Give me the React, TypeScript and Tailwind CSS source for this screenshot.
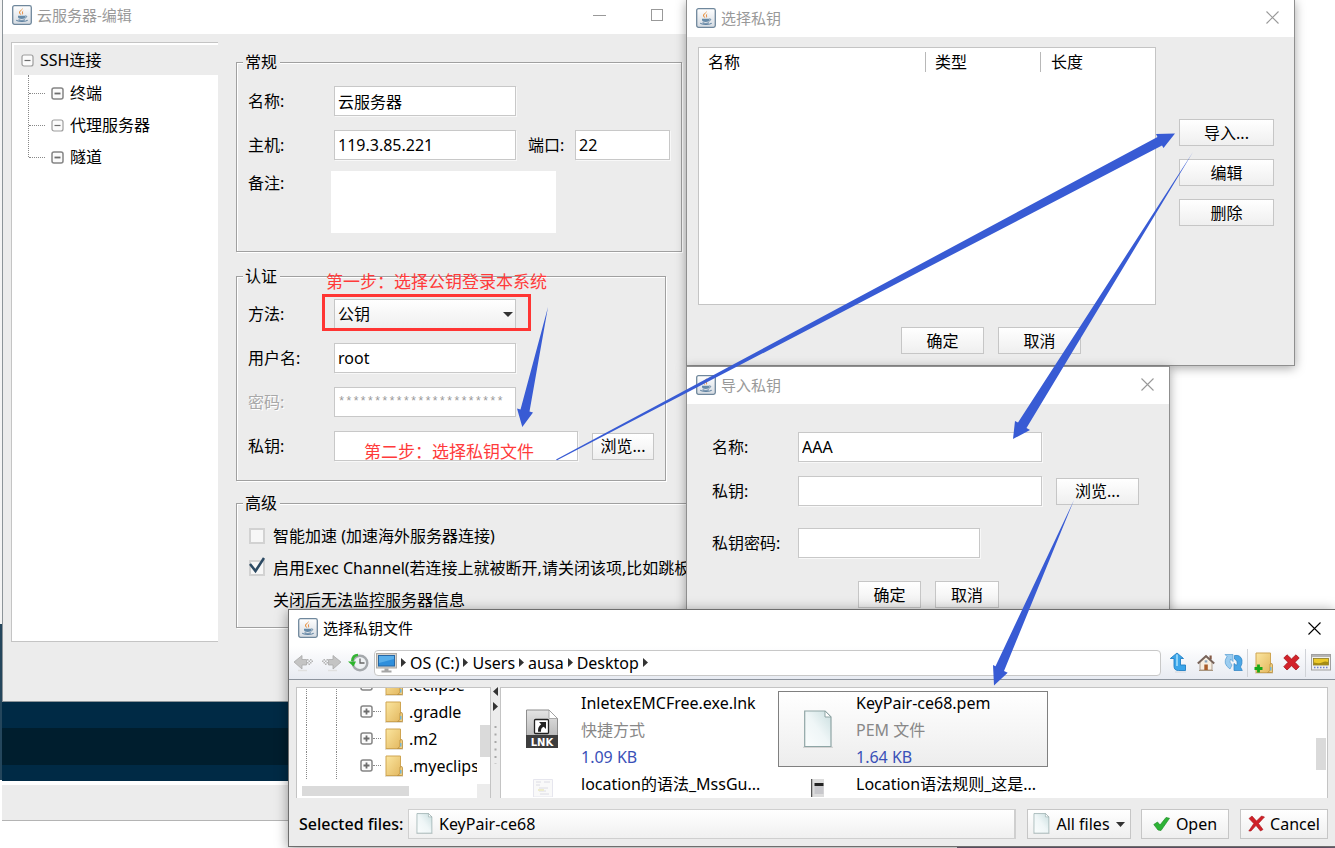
import React from "react";

const FIELD =
  "h-[30px] border border-[#c8c8c8] bg-white px-[3px] text-[16px] leading-6 text-black outline-none shadow-[1px_1px_0_#f8f8f8]";
const BUTTON =
  "flex h-[27px] items-center justify-center border border-[#c6c6c6] bg-linear-to-b from-white to-[#efefef] text-[16px] leading-6 text-black";
const GROUP =
  "border border-[#a0a0a0] pl-[11px] shadow-[1px_1px_0_#fff,inset_1px_1px_0_#fff]";
const LEGEND = "-ml-[5px] h-6 bg-[#ececec] pl-[2px] pr-[3px] text-[16px] leading-6";

function JavaIcon() {
  return (
    <svg width="20" height="20" viewBox="0 0 20 20" className="shrink-0" aria-hidden="true">
      <defs>
        <linearGradient id="java-bg" x1="0" y1="0" x2="0" y2="1">
          <stop offset="0" stopColor="#ffffff" />
          <stop offset="1" stopColor="#d5dbe2" />
        </linearGradient>
      </defs>
      <rect x="0.7" y="0.7" width="18.6" height="18.6" rx="1.8" fill="url(#java-bg)" stroke="#6f879c" strokeWidth="1.3" />
      <path d="M10.6 2.8c.7 2.4-3.2 3.4-2.4 5.2.3.8 1 1.3 1.2 2-1.500-.7-2.900-1.800-2.300-3.300.7-1.500 3.300-1.900 3.500-3.900z" fill="#e8913f" />
      <path d="M12 5.400c-1.600.7-2.400 1.400-2 2.300.3.7.7 1.200-.1 2.100 1.700-.9 1.400-1.700.9-2.300-.5-.8.2-1.300 1.200-2.100z" fill="#e07b28" />
      <path d="M6 10.700h7.200v1.400c0 1.300-1.300 2-3.500 2s-3.700-.7-3.700-2z" fill="#668aa8" />
      <path d="M13.200 11c2-.5 2.200 1.400-.5 2.200" fill="none" stroke="#5d80a0" strokeWidth="1" />
      <path d="M4.300 15c1.600 1.900 9.700 1.900 11.300 0M6.500 14.700c1.500.8 4.900.8 6.400 0" fill="none" stroke="#5d80a0" strokeWidth="1.100" />
    </svg>
  );
}

function CloseIcon() {
  return (
    <svg width="13" height="13" viewBox="0 0 13 13" stroke="currentColor" fill="none" aria-hidden="true">
      <path d="M0.500 0.500l12 12M12.500 0.500l-12 12" strokeWidth="1.100" />
    </svg>
  );
}

function NodeIcon({ plus = false, strong = false }: { plus?: boolean; strong?: boolean }) {
  return (
    <svg width="13" height="13" viewBox="0 0 13 13" className="shrink-0" fill="none" aria-hidden="true">
      <rect x="1" y="1" width="11" height="11" rx="2" fill="#fbfbfb" stroke={strong ? "#858585" : "#9d9d9d"} strokeWidth={strong ? 1.500 : 1.200} />
      <path d={plus ? "M3.500 6.500h6M6.500 3.500v6" : "M3.500 6.500h6"} stroke="#6d6d6d" strokeWidth={strong ? 1.800 : 1.200} />
    </svg>
  );
}

function PageIcon({ width, height }: { width: number; height: number }) {
  return (
    <svg width={width} height={height} viewBox="0 0 30 38" preserveAspectRatio="none" className="shrink-0" aria-hidden="true">
      <defs>
        <linearGradient id="page-bg" x1="0" y1="1" x2="1" y2="0">
          <stop offset="0" stopColor="#fafdfd" />
          <stop offset="0.500" stopColor="#eff6f7" />
          <stop offset="1" stopColor="#c9dedf" />
        </linearGradient>
      </defs>
      <path d="M0 37.300h30" stroke="#d0d0d0" strokeWidth="1.200" />
      <path d="M1.700 1h20.300l6 6v29.500H1.700z" fill="url(#page-bg)" stroke="#8fa5a5" strokeWidth="1.200" />
      <path d="M22 1v6h6z" fill="#fff" stroke="#8fa5a5" strokeWidth="1" />
    </svg>
  );
}

function FolderIcon({ add = false }: { add?: boolean }) {
  return (
    <svg width="20" height="22" viewBox="0 0 20 22" className="shrink-0" aria-hidden="true">
      <defs>
        <linearGradient id="folder-bg" x1="0" y1="0" x2="1" y2="1">
          <stop offset="0" stopColor="#fbe6a0" />
          <stop offset="1" stopColor="#e3b860" />
        </linearGradient>
      </defs>
      <path d="M1 21h18" stroke="#c9bfa8" strokeWidth="1" />
      <path d="M2 1h14.500v19.500H2z" fill="url(#folder-bg)" stroke="#cfa552" strokeWidth="1" />
      <path d="M13.500 20.500l2.500-2V12q2.500-1.500 2.500 1v7.500z" fill="#f0cf82" stroke="#b98e3e" strokeWidth=".8" />
      <path d="M16.800 15v3.500" stroke="#64b5e6" strokeWidth="1.300" />
      {add && <path d="M4.500 12.500v8M.5 16.500h8" stroke="#18a818" strokeWidth="2.800" />}
    </svg>
  );
}

function MonitorIcon() {
  return (
    <svg width="21" height="20" viewBox="0 0 21 20" className="shrink-0" aria-hidden="true">
      <rect x=".5" y=".5" width="20" height="14.500" fill="#d6d3cd" stroke="#aeaba6" />
      <rect x="2.500" y="2.500" width="16" height="10.500" fill="#2f8fdc" stroke="#2767a4" />
      <path d="M3 3h15v3L3 10z" fill="#58aeea" />
      <path d="M8.500 15.500h4v2h3v2h-10v-2h3z" fill="#a5a5a5" />
    </svg>
  );
}

function NavArrow({ flip = false }: { flip?: boolean }) {
  return (
    <svg width="21" height="18" viewBox="0 0 21 18" aria-hidden="true">
      <g transform={flip ? "translate(21 0) scale(-1 1)" : undefined}>
        <path d="M1 8l8-6.500v4h4.500v5.500H9v4z" fill="#c4c4c4" stroke="#a9a9a9" strokeWidth=".8" />
        <path d="M14 5h1.500v1.500H14zM15.500 6.500h1.500V8h-1.500zM17 5h1.500v1.500H17zM18.500 6.500H20V8h-1.500zM14 8h1.500v1.500H14zM17 8h1.500v1.500H17zM15.500 9.500h1.500V11h-1.500z" fill="#b4b4b4" />
        <path d="M5 16.500h9" stroke="#e0e0e0" strokeWidth="1.500" />
      </g>
    </svg>
  );
}

function HistoryIcon() {
  return (
    <svg width="21" height="20" viewBox="0 0 21 20" aria-hidden="true">
      <circle cx="12" cy="10" r="7.300" fill="#eef1f4" stroke="#a4a8ac" strokeWidth="2.400" />
      <path d="M12 5.500V10h4.500" fill="none" stroke="#666" strokeWidth="1.300" />
      <path d="M10 2C6.500 2 4.500 4.500 4.300 8" fill="none" stroke="#35b535" strokeWidth="2.600" />
      <path d="M0 8.500L8 8.500 5.500 13.500z" fill="#2db52d" />
    </svg>
  );
}

function UpIcon() {
  return (
    <svg width="18" height="21" viewBox="0 0 18 21" aria-hidden="true">
      <path d="M8 1L14.500 6.500H11.500V13h5v5.500H9.500q-4.500 0-4.500-4.500V6.500H1.300z" fill="#3aa5ea" stroke="#2380c4" strokeWidth=".9" />
      <path d="M8 2.500V14" stroke="#8ed2f7" strokeWidth="2" />
      <path d="M6 20h11" stroke="#d4d8de" />
    </svg>
  );
}

function HomeIcon() {
  return (
    <svg width="18" height="18" viewBox="0 0 18 18" aria-hidden="true">
      <path d="M12.500 1.500h2.200v4h-2.200z" fill="#865a45" />
      <path d="M3 8l6-5.500L15 8v8H3z" fill="#f7efe2" stroke="#a08c78" strokeWidth=".8" />
      <path d="M.8 9.500L9 2l8.200 7.500" fill="none" stroke="#77635a" strokeWidth="2" />
      <path d="M7.300 10.500h3.500V16H7.300z" fill="#a95d2a" />
      <path d="M7.700 6.300h2.600V8.500H7.700z" fill="#8ba6bd" />
      <path d="M2 16.500h14" stroke="#a8957f" />
    </svg>
  );
}

function RefreshIcon() {
  return (
    <svg width="19" height="19" viewBox="0 0 19 19" aria-hidden="true">
      <path d="M1 1.500h8v7L6.500 6Q4.500 9 8 12l-2 4Q-2 10.500 3 3.500z" fill="#9ccdf0" stroke="#5a9fd2" strokeWidth=".7" />
      <path d="M10.500 2.500q6-1 7.500 4.500.500 4-1.500 7l1.800 3.500H10v-7l2.500 2Q14.500 8 10.500 6z" fill="#4aa6e6" stroke="#2b7fc0" strokeWidth=".7" />
    </svg>
  );
}

function DeleteIcon({ thin = false }: { thin?: boolean }) {
  return (
    <svg width="17" height="17" viewBox="0 0 17 17" className="shrink-0" aria-hidden="true">
      {thin ? (
        <path d="M1 3.500L4 1l4.500 5L13.500 1 16.500 2l-6 6.500 4.500 6-2.500 1.500L8 10.500 3 16H.8l5-7.500z" fill="#cf2027" stroke="#a9161c" strokeWidth=".6" />
      ) : (
        <path d="M4 .8L8.500 5 13 .8 16.200 4 12 8.300l4.200 4.400L13 16l-4.500-4.200L4 16 .8 12.700 5 8.300.8 4z" fill="#d3222a" stroke="#a3151b" strokeWidth=".8" />
      )}
    </svg>
  );
}

function ViewIcon() {
  return (
    <svg width="20" height="17" viewBox="0 0 20 17" aria-hidden="true">
      <rect x=".5" y=".5" width="19" height="15.500" fill="#f0f0ee" stroke="#a0a0a0" />
      <path d="M1 2h18" stroke="#b4b4b4" strokeWidth="2" />
      <rect x="2.500" y="4.500" width="15" height="6.500" fill="#ecc92a" stroke="#8d7a22" strokeWidth=".8" />
      <path d="M3 8.500q5 1.500 8 0t6-.5v3H3z" fill="#a58c14" />
      <path d="M3 13.500h14" stroke="#6c7fd0" strokeWidth="1.300" strokeDasharray="1.500 1.500" />
    </svg>
  );
}

function CheckIcon() {
  return (
    <svg width="17" height="16" viewBox="0 0 17 16" className="shrink-0" aria-hidden="true">
      <path d="M.8 8.500L4.500 6l2.500 3L13 1.500l3.500.8L8 14.500 5 14z" fill="#2db336" stroke="#1f8e28" strokeWidth=".7" />
    </svg>
  );
}

function LnkIcon() {
  return (
    <svg width="34" height="40" viewBox="0 0 34 40" aria-hidden="true">
      <defs>
        <linearGradient id="lnk-bg" x1="0" y1="0" x2="0" y2="1">
          <stop offset="0" stopColor="#e4e4e4" />
          <stop offset="1" stopColor="#a9a9a9" />
        </linearGradient>
      </defs>
      <path d="M1.500 1h22.500l8.500 8.500V38.500h-31z" fill="url(#lnk-bg)" stroke="#8d8d8d" />
      <path d="M24 1v8.500h8.500z" fill="#fff" stroke="#999" strokeWidth=".8" />
      <rect x="9.500" y="10.500" width="14" height="14" rx="1" fill="#fff" stroke="#222" strokeWidth="1.300" />
      <path d="M14 13h7v7l-2.300-2.300q-3 1-2.700 5h-3q-.5-5 3.200-7.500z" fill="#222" />
      <path d="M1 26h32v13H1z" fill="#3d3d3d" />
      <text x="17" y="36.500" textAnchor="middle" fill="#fff" fontSize="10" fontWeight="700" fontFamily="DejaVu Sans, sans-serif">
        LNK
      </text>
    </svg>
  );
}

function Caret() {
  return (
    <svg width="5" height="9" viewBox="0 0 5 9" className="shrink-0" aria-hidden="true">
      <path d="M0 0L5 4.500 0 9z" fill="#333" />
    </svg>
  );
}

function Row({ label, htmlFor, muted = false, children }: { label: string; htmlFor: string; muted?: boolean; children: React.ReactNode }) {
  return (
    <div className="flex items-center">
      <label
        htmlFor={htmlFor}
        className={muted ? "w-[86px] shrink-0 text-[#a8a8a8] [text-shadow:1px_1px_0_#fff]" : "w-[86px] shrink-0"}
      >
        {label}
      </label>
      {children}
    </div>
  );
}

function TreeChild({ label, strong = false }: { label: string; strong?: boolean }) {
  return (
    <li className="flex h-8 items-center">
      <span className="mr-[6px] w-[16px] border-t border-dotted border-[#888]" />
      <NodeIcon strong={strong} />
      <span className="ml-[6px]">{label}</span>
    </li>
  );
}

function EditWindow() {
  return (
    <section className="absolute left-[2px] top-0 w-[744px] overflow-hidden border-b border-l border-[#8c9499] bg-[#ececec]">
      <header className="flex h-[34px] items-center bg-white pb-1 pl-[9px] text-[15px] text-[#999]">
        <JavaIcon />
        <h1 className="ml-[5px] flex-1">云服务器-编辑</h1>
        <button aria-label="最小化" className="flex h-6 w-6 items-center justify-center">
          <span className="w-[13px] border-t border-[#999]" />
        </button>
        <button aria-label="最大化" className="ml-[34px] mr-[77px] flex h-6 w-6 items-center justify-center">
          <span className="size-3 border border-[#999]" />
        </button>
      </header>
      <div className="flex gap-[18px] pb-[59px] pl-2 pt-2">
        <nav className="w-[207px] shrink-0 border-y border-l border-[#c4c4c4] bg-white pl-[2px] pt-[2px]">
          <div className="flex h-[30px] items-center bg-[#ececec] pl-[7px]">
            <NodeIcon />
            <span className="ml-[6px]">SSH连接</span>
          </div>
          <div className="flex pl-[14px]">
            <div className="h-[82px] border-l border-dotted border-[#888]" />
            <ul className="pt-[2px]">
              <TreeChild label="终端" strong />
              <TreeChild label="代理服务器" />
              <TreeChild label="隧道" strong />
            </ul>
          </div>
        </nav>
        <form className="flex flex-1 flex-col pb-[14px] pt-2">
          <fieldset className={GROUP + " mr-16 pb-[18px] pt-3"}>
            <legend className={LEGEND}>常规</legend>
            <div className="flex flex-col gap-[14px]">
              <Row label="名称:" htmlFor="host-name">
                <input id="host-name" defaultValue="云服务器" className={FIELD + " w-[182px]"} />
              </Row>
              <Row label="主机:" htmlFor="host-ip">
                <input id="host-ip" defaultValue="119.3.85.221" className={FIELD + " w-[182px]"} />
                <label htmlFor="host-port" className="ml-3 w-[47px]">
                  端口:
                </label>
                <input id="host-port" defaultValue="22" className={FIELD + " w-[95px]"} />
              </Row>
            </div>
            <div className="mt-[11px] flex">
              <label htmlFor="host-note" className="w-[83px]">
                备注:
              </label>
              <textarea id="host-note" className="h-[62px] w-[225px] resize-none bg-white outline-none" />
            </div>
          </fieldset>
          <fieldset className={GROUP + " mr-20 mt-3 pb-[19px] pt-[11px]"}>
            <legend className={LEGEND}>认证</legend>
            <div className="flex flex-col gap-[14px]">
              <Row label="方法:" htmlFor="auth-method">
                <div className="relative flex items-center">
                  <select
                    id="auth-method"
                    className="h-[30px] w-[182px] appearance-none border border-[#c6c6c6] bg-linear-to-b from-white to-[#efefef] px-[3px] outline-none"
                  >
                    <option>公钥</option>
                  </select>
                  <svg width="10" height="5" viewBox="0 0 10 5" className="pointer-events-none absolute right-[3px]" aria-hidden="true">
                    <path d="M0 0h10L5 5z" fill="#333" />
                  </svg>
                </div>
              </Row>
              <Row label="用户名:" htmlFor="auth-user">
                <input id="auth-user" defaultValue="root" className={FIELD + " w-[182px]"} />
              </Row>
              <Row label="密码:" htmlFor="auth-password" muted>
                <input
                  id="auth-password"
                  disabled
                  defaultValue="***********************"
                  className="h-[30px] w-[182px] border border-[#c8c8c8] bg-white px-[3px] font-['Liberation_Mono',monospace] text-[12px] text-[#999]"
                />
              </Row>
              <Row label="私钥:" htmlFor="auth-key">
                <input id="auth-key" className={FIELD + " w-[244px]"} />
                <button type="button" className={BUTTON + " ml-[14px] w-[62px]"}>
                  浏览...
                </button>
              </Row>
            </div>
          </fieldset>
          <fieldset className={GROUP + " -mr-2 mt-[10px] pb-[15px] pt-[9px]"}>
            <legend className={LEGEND}>高级</legend>
            <div className="flex flex-col gap-2 whitespace-nowrap">
              <label className="flex items-center">
                <input type="checkbox" className="ml-px mr-2 size-4 appearance-none border-2 border-[#d2d2d2] bg-[#f7f7f7]" />
                智能加速 (加速海外服务器连接)
              </label>
              <label className="relative flex items-center">
                <input
                  type="checkbox"
                  defaultChecked
                  className="ml-px mr-2 size-4 appearance-none border-2 border-[#d2d2d2] bg-[#f7f7f7]"
                />
                <svg width="18" height="18" viewBox="0 0 18 18" className="absolute left-0 top-0" aria-hidden="true">
                  <path d="M2 8l5.500 7L16 2" fill="none" stroke="#2c4a63" strokeWidth="2.500" />
                </svg>
                启用Exec Channel(若连接上就被断开,请关闭该项,比如跳板
              </label>
              <p className="pl-[25px]">关闭后无法监控服务器信息</p>
            </div>
          </fieldset>
        </form>
      </div>
    </section>
  );
}

function KeyListDialog() {
  return (
    <section className="absolute left-[686px] top-0 w-[609px] border-x border-b border-[#8f8f8f] bg-[#ececec] shadow-[0_2px_10px_rgba(0,0,0,0.35)]">
      <header className="flex h-[37px] items-center bg-white pb-[2px] pl-[9px] pr-[15px] text-[15px] text-[#999]">
        <JavaIcon />
        <h2 className="ml-[5px] flex-1">选择私钥</h2>
        <button aria-label="关闭">
          <CloseIcon />
        </button>
      </header>
      <div className="flex gap-[23px] px-[11px] pt-[10px]">
        <div className="h-[258px] w-[458px] border border-[#c4c4c4] bg-white pt-[2px]">
          <table className="w-full table-fixed text-left">
            <thead>
              <tr>
                <th className="w-[226px] pl-[9px] font-normal">名称</th>
                <th className="w-[115px] font-normal">
                  <span className="block h-5 border-l border-[#b8b8b8] pl-[9px] leading-5">类型</span>
                </th>
                <th className="font-normal">
                  <span className="block h-5 border-l border-[#b8b8b8] pl-[10px] leading-5">长度</span>
                </th>
              </tr>
            </thead>
          </table>
        </div>
        <div className="flex w-[95px] flex-col gap-[13px] pt-[72px]">
          <button className={BUTTON}>导入...</button>
          <button className={BUTTON}>编辑</button>
          <button className={BUTTON}>删除</button>
        </div>
      </div>
      <div className="flex gap-[14px] pb-[11px] pl-[214px] pt-[22px]">
        <button className={BUTTON + " w-[83px]"}>确定</button>
        <button className={BUTTON + " w-[83px]"}>取消</button>
      </div>
    </section>
  );
}

function ImportDialog() {
  return (
    <section className="absolute left-[686px] top-[366px] w-[484px] border border-[#8f8f8f] bg-[#ececec] shadow-[0_2px_10px_rgba(0,0,0,0.35)]">
      <header className="flex h-[37px] items-center bg-white pb-[2px] pl-[9px] pr-[15px] text-[15px] text-[#999]">
        <JavaIcon />
        <h2 className="ml-[5px] flex-1">导入私钥</h2>
        <button aria-label="关闭">
          <CloseIcon />
        </button>
      </header>
      <form className="pb-8 pl-[25px] pt-7">
        <div className="flex flex-col gap-[14px]">
          <Row label="名称:" htmlFor="key-name">
            <input id="key-name" defaultValue="AAA" className={FIELD + " w-[244px]"} />
          </Row>
          <Row label="私钥:" htmlFor="key-file">
            <input id="key-file" className={FIELD + " w-[244px]"} />
            <button type="button" className={BUTTON + " ml-[14px] w-[83px]"}>
              浏览...
            </button>
          </Row>
        </div>
        <div className="mt-[22px]">
          <Row label="私钥密码:" htmlFor="key-pass">
            <input id="key-pass" className={FIELD + " w-[182px]"} />
          </Row>
        </div>
        <div className="mt-[23px] flex gap-[14px] pl-[146px]">
          <button type="button" className={BUTTON + " w-[63px]"}>
            确定
          </button>
          <button type="button" className={BUTTON + " w-[64px]"}>
            取消
          </button>
        </div>
      </form>
    </section>
  );
}

function FolderRow({ name }: { name: string }) {
  return (
    <li className="flex h-[27px] shrink-0 items-center">
      <span className="ml-[9px] h-full w-[30px] shrink-0 border-l border-dotted border-[#888]" />
      <span className="h-full w-6 shrink-0 border-l border-dotted border-[#888]" />
      <NodeIcon plus strong />
      <span className="mr-[3px] w-2 shrink-0 border-t border-dotted border-[#888]" />
      <FolderIcon />
      <span className="ml-[5px]">{name}</span>
    </li>
  );
}

function FileDialog() {
  return (
    <section className="absolute left-[288px] right-0 top-[609px] border-y border-l border-[#6e6e6e] bg-[#ececec] shadow-[0_2px_12px_rgba(0,0,0,0.4)]">
      <header className="flex h-9 items-center bg-white pl-[9px] pr-[14px] text-[15px]">
        <JavaIcon />
        <h2 className="ml-[5px] flex-1">选择私钥文件</h2>
        <button aria-label="关闭">
          <CloseIcon />
        </button>
      </header>
      <div className="flex h-[34px] items-center border-b border-[#8d949e] bg-linear-to-b from-white to-[#e8ebf2] pl-1">
        <button aria-label="后退">
          <NavArrow />
        </button>
        <button aria-label="前进" className="ml-[7px]">
          <NavArrow flip />
        </button>
        <button aria-label="历史" className="ml-[6px] mr-[5px]">
          <HistoryIcon />
        </button>
        <nav className="flex h-[26px] flex-1 items-center gap-1 rounded-sm border border-[#c8c8c8] bg-white pl-px">
          <MonitorIcon />
          <Caret />
          <a href="#c">OS (C:)</a>
          <Caret />
          <a href="#users">Users</a>
          <Caret />
          <a href="#ausa">ausa</a>
          <Caret />
          <a href="#desktop">Desktop</a>
          <Caret />
        </nav>
        <div className="flex items-center pl-2 pr-1">
          <button aria-label="上一级">
            <UpIcon />
          </button>
          <button aria-label="主目录" className="ml-[10px]">
            <HomeIcon />
          </button>
          <button aria-label="刷新" className="ml-[9px]">
            <RefreshIcon />
          </button>
          <span className="ml-1 h-7 border-l border-[#d0d3d8]" />
          <button aria-label="新建文件夹" className="ml-[6px]">
            <FolderIcon add />
          </button>
          <button aria-label="删除" className="ml-[9px]">
            <DeleteIcon />
          </button>
          <span className="ml-[5px] h-7 border-l border-[#d0d3d8]" />
          <button aria-label="视图" className="ml-[5px]">
            <ViewIcon />
          </button>
        </div>
      </div>
      <div className="flex h-[118px] pl-[7px] pr-[7px] pt-[7px]">
        <div className="flex w-[195px] shrink-0 border-x border-t border-[#c4c4c4] bg-white">
          <div className="flex min-w-0 flex-1 flex-col">
            <ul className="flex h-24 flex-col justify-end overflow-hidden whitespace-nowrap pb-[5px]">
              <FolderRow name=".eclipse" />
              <FolderRow name=".gradle" />
              <FolderRow name=".m2" />
              <FolderRow name=".myeclipse" />
            </ul>
            <div className="ml-[5px] mt-[2px] h-[10px] w-[107px] bg-[#dadada]" />
          </div>
          <div className="flex w-[13px] flex-col items-end justify-between bg-white">
            <div className="mt-[37px] h-8 w-[10px] bg-[#dadada]" />
            <div className="h-[14px] w-full bg-[#ececec]" />
          </div>
        </div>
        <div className="flex w-[9px] flex-col items-center gap-[6px]">
          <svg width="5" height="9" viewBox="0 0 5 9" aria-hidden="true">
            <path d="M5 0v9L0 4.500z" fill="#333" />
          </svg>
          <Caret />
          <svg width="3" height="40" viewBox="0 0 3 40" className="mt-[8px]" aria-hidden="true">
            <path d="M1.500 1v38" stroke="#a8a8a8" strokeWidth="2" strokeDasharray="2 5.500" />
          </svg>
        </div>
        <div className="flex flex-1 border-x border-t border-[#c4c4c4] bg-white">
          <ul className="grid h-[110px] flex-1 grid-cols-[270px_270px] content-start gap-x-[5px] gap-y-1 overflow-hidden pl-[2px] pt-[3px]">
            <li className="flex h-[76px] leading-[27px]">
              <div className="flex w-[78px] items-center justify-center">
                <LnkIcon />
              </div>
              <div className="-mt-px">
                <p className="h-[27px]">InletexEMCFree.exe.lnk</p>
                <p className="h-[27px] text-[#888]">快捷方式</p>
                <p className="h-[27px] text-[#3a50b8]">1.09 KB</p>
              </div>
            </li>
            <li className="flex h-[76px] border border-[#808080] bg-linear-to-b from-white to-[#ededed] leading-[27px]">
              <div className="flex w-[77px] items-center justify-center">
                <PageIcon width={30} height={38} />
              </div>
              <div className="-mt-[2px]">
                <p className="h-[27px]">KeyPair-ce68.pem</p>
                <p className="h-[27px] text-[#888]">PEM 文件</p>
                <p className="h-[27px] text-[#3a50b8]">1.64 KB</p>
              </div>
            </li>
            <li className="flex leading-[27px]">
              <div className="w-[78px] pl-[30px] pt-2">
                <svg width="20" height="18" viewBox="0 0 20 18" aria-hidden="true">
                  <path d="M.5 .5h19V18H.5z" fill="#f9f9f9" stroke="#e6e6ee" />
                  <path d="M3 3h5M11 3h6M3 6h4M6 9h9M6 12h7M7 15h9" stroke="#dcdce4" />
                  <path d="M5 10h6v2H5z" fill="#eeeccd" />
                </svg>
              </div>
              <p>location的语法_MssGu...</p>
            </li>
            <li className="flex leading-[27px]">
              <div className="w-[78px] pl-[33px] pt-2">
                <svg width="13" height="18" viewBox="0 0 13 18" aria-hidden="true">
                  <path d="M0 0h13v18H0z" fill="#ddd" />
                  <path d="M.5 0v18" stroke="#555" strokeWidth="1.500" />
                  <path d="M3.500 4h9v3h-9z" fill="#222" />
                  <path d="M3.500 7h9v8h-9z" fill="#c8c8cc" />
                </svg>
              </div>
              <p>Location语法规则_这是...</p>
            </li>
          </ul>
          <div className="mr-px mt-[50px] h-8 w-[10px] bg-[#dadada]" />
        </div>
      </div>
      <div className="flex h-[48px] items-center pl-[10px] pr-[7px] pt-[3px]">
        <label htmlFor="selected-files" className="w-[109px] font-medium">
          Selected files:
        </label>
        <div className="flex h-[30px] flex-1 items-center border border-r-2 border-[#cfcfcf] bg-linear-to-b from-white to-[#f0f0f0] pl-[7px]">
          <PageIcon width={17} height={21} />
          <input id="selected-files" defaultValue="KeyPair-ce68" className="ml-[6px] flex-1 bg-transparent outline-none" />
        </div>
        <button className={BUTTON + " ml-[11px] h-[30px]! w-[104px]"}>
          <PageIcon width={17} height={21} />
          <span className="ml-[6px] mr-[6px]">All files</span>
          <svg width="9" height="5" viewBox="0 0 9 5" className="mt-[2px]" aria-hidden="true">
            <path d="M0 0h9L4.500 5z" fill="#333" />
          </svg>
        </button>
        <button className={BUTTON + " ml-[10px] h-[30px]! w-[88px] gap-[6px]"}>
          <CheckIcon />
          Open
        </button>
        <button className={BUTTON + " ml-[11px] h-[30px]! w-[88px] gap-[5px]"}>
          <DeleteIcon thin />
          Cancel
        </button>
      </div>
    </section>
  );
}

function Annotations() {
  return (
    <div className="pointer-events-none absolute inset-0 text-[17px] leading-6 text-[#ff3b3b]">
      <div className="absolute left-[322px] top-[294px] h-[37px] w-[209px] border-3 border-[#ff3533]" />
      <p className="absolute left-[326px] top-[270px]">第一步：选择公钥登录本系统</p>
      <p className="absolute left-[364px] top-[440px]">第二步：选择私钥文件</p>
      <svg width="1335" height="848" viewBox="0 0 1335 848" fill="#385bd4" className="absolute left-0 top-0" aria-hidden="true">
        <path d="M548 307L529.500 411.500 533 412.500 522.300 427 517 408.500 520.500 409.500z" />
        <path d="M556 459.500L1157.500 137 1156 134 1175 133.500 1163.500 148 1162 145.500 557 460.300z" />
        <path d="M1193 152L1018 422.500 1015 421 1013 439 1030 430 1026.500 428z" />
        <path d="M1074 500L995.500 666.200 993 665 994 685.500 1007.700 672.700 1004 671z" />
      </svg>
    </div>
  );
}

export default function App() {
  return (
    <main className="relative h-screen w-full overflow-hidden bg-white font-['Noto_Sans','Noto_Sans_CJK_SC',sans-serif] text-[16px] leading-6 text-black">
      <div className="absolute left-0 top-0 h-[780px] w-[2px] bg-linear-to-b from-[#f4f4f4] from-80% to-[#24465c] to-80%" />
      <div className="absolute left-[2px] top-[300px] w-[956px] bg-[#002a45]">
        <div className="h-[428px]" />
        <div className="h-[37px] bg-[#001e2e]" />
        <div className="h-4" />
      </div>
      <div className="absolute left-[958px] top-[300px] h-[100px] w-[194px] bg-[#8f8f8f]" />
      <div className="absolute left-[2px] top-[785px] h-9 w-[700px] border-b border-[#b4b4b4] bg-[#ececec]" />
      <div className="absolute bottom-0 left-[957px] right-0 h-1 bg-[#75647c]" />
      <EditWindow />
      <KeyListDialog />
      <ImportDialog />
      <FileDialog />
      <Annotations />
    </main>
  );
}
